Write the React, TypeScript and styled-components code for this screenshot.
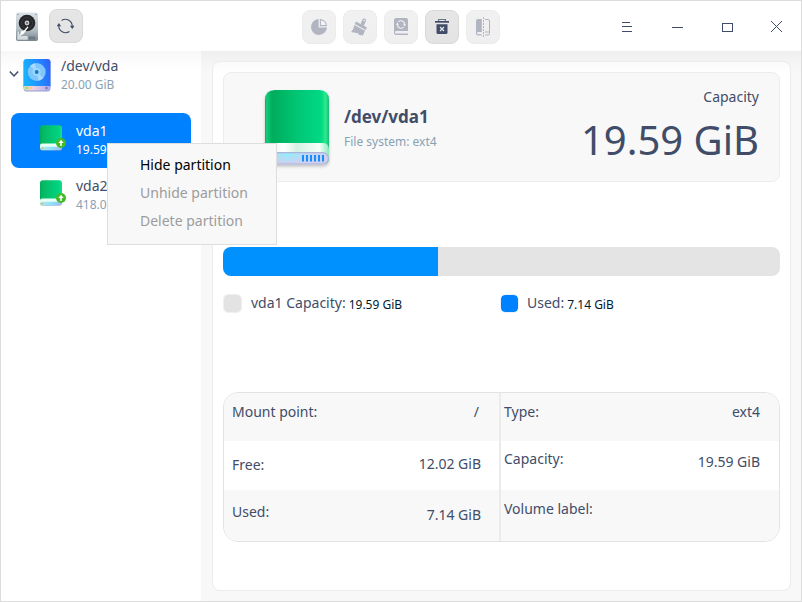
import React from "react";
import styled, { createGlobalStyle, css } from "styled-components";

const GlobalStyle = createGlobalStyle`
  * { box-sizing: border-box; }
  body {
    margin: 0;
    font-family: "Noto Sans", sans-serif;
    font-size: 14px;
    line-height: 19px;
    color: #414d68;
    white-space: nowrap;
  }
`;

const Window = styled.div`
  position: relative;
  width: 802px;
  height: 602px;
  border: 1px solid #dcdcdc;
  background: #f8f8f8;
  display: flex;
  flex-direction: column;
  overflow: hidden;
`;

const TitleBar = styled.header`
  height: 50px;
  flex: none;
  background: #fff;
  display: grid;
  grid-template-columns: 301px 1fr 200px;
`;

const TitleLeft = styled.div`
  display: flex;
  align-items: flex-start;
  gap: 10px;
  padding: 8px 0 0 14px;
`;

const AppIcon = styled.svg`
  width: 24px;
  height: 32px;
  margin-top: 1px;
`;

const Tools = styled.div`
  display: flex;
  gap: 7px;
  padding-top: 9px;
`;

const ToolButton = styled.button<{ $enabled?: boolean }>`
  width: 34px;
  height: 34px;
  padding: 0;
  border-radius: 8px;
  border: 1px solid ${(p) => (p.$enabled ? "#d9d9d9" : "#ececec")};
  background: ${(p) => (p.$enabled ? "linear-gradient(#e6e6e6, #e3e3e3)" : "linear-gradient(#f1f1f1, #efefef)")};
  color: ${(p) => (p.$enabled ? "#414d68" : "#b0b5c1")};
  display: flex;
  align-items: center;
  justify-content: center;
  svg { display: block; }
`;

const WindowControls = styled.div`
  display: grid;
  grid-template-columns: repeat(4, 50px);
  height: 50px;
`;

const Control = styled.button`
  border: 0;
  padding: 0;
  background: none;
  color: #414d68;
  svg { display: block; }
`;

const Body = styled.main`
  flex: 1;
  display: flex;
  min-height: 0;
`;

const Sidebar = styled.aside`
  width: 200px;
  background: linear-gradient(#f7f7f7, #fff 18px);
`;

const Disk = styled.div`
  height: 62px;
  display: flex;
  padding: 5px 0 0 8px;
`;

const Chevron = styled.svg`
  width: 10px;
  height: 8px;
  margin: 14px 4px 0 0;
`;

const DiskIcon = styled.svg`
  width: 28px;
  height: 36px;
  margin: 1px 10px 0 0;
`;

const DeviceName = styled.div``;

const DeviceSize = styled.div`
  font-size: 12px;
  line-height: 17px;
  margin-top: 1px;
  color: #8aa1b4;
`;

const Partition = styled.div<{ $selected?: boolean }>`
  height: 55px;
  width: 180px;
  margin-left: 10px;
  border-radius: 8px;
  display: flex;
  padding: 8px 0 0 28px;
  ${(p) => p.$selected && css`
    background: #0081ff;
    color: #fff;
    & ${DeviceSize} { color: #fff; }
  `}
`;

const PartitionIcon = styled.svg`
  width: 28px;
  height: 30px;
  margin: 2px 9px 0 0;
`;

const Content = styled.section`
  flex: 1;
  padding: 10px 10px 10px 11px;
  background: linear-gradient(#efefef, #f8f8f8 20px);
`;

const Card = styled.div`
  height: 530px;
  border: 1px solid #ececec;
  border-radius: 8px;
  background: linear-gradient(#fafafa, #fff 12px);
  padding: 10px;
`;

const Hero = styled.div`
  height: 110px;
  border: 1px solid #ededed;
  border-radius: 8px;
  background: #f8f8f8;
  display: flex;
  padding: 14px 20px 0 37px;
`;

const HeroIcon = styled.svg`
  width: 72px;
  height: 84px;
  margin-top: 1px;
`;

const HeroInfo = styled.div`
  flex: 1;
  padding: 18px 0 0 11px;
`;

const HeroName = styled.h1`
  margin: 0;
  font-size: 17px;
  font-weight: 700;
  line-height: 24px;
`;

const FileSystem = styled.div`
  margin-top: 4px;
  font-size: 12px;
  line-height: 17px;
  color: #8aa1b4;
`;

const HeroCapacity = styled.div`
  text-align: right;
`;

const CapacityValue = styled.div`
  font-size: 40px;
  line-height: 54px;
  margin-top: 7px;
`;

const UsageBar = styled.div`
  height: 29px;
  margin-top: 65px;
  border-radius: 8px;
  background: #e4e4e4;
  overflow: hidden;
`;

const UsageFill = styled.div`
  width: 215px;
  height: 100%;
  background: #0091ff;
`;

const Legend = styled.div`
  display: grid;
  grid-template-columns: 278px 1fr;
  margin-top: 17px;
`;

const LegendItem = styled.div`
  display: flex;
  height: 20px;
`;

const Swatch = styled.span<{ $used?: boolean }>`
  width: 19px;
  height: 19px;
  margin: 1px 9px 0 0;
  border: 1px solid ${(p) => (p.$used ? "#e8f3ff" : "#f0f0f0")};
  border-radius: 5px;
  background: ${(p) => (p.$used ? "#0081ff" : "#e3e3e3")};
  background-clip: padding-box;
  ${(p) => p.$used && "margin-left: -1px; margin-right: 8px;"}
`;

const LegendValue = styled.span`
  margin: 3px 0 0 3px;
  font-size: 12px;
  line-height: 17px;
  color: #001a2e;
`;

const Details = styled.div`
  height: 150px;
  margin-top: 79px;
  border: 1px solid #e3e3e3;
  border-radius: 15px;
  overflow: hidden;
  display: grid;
  grid-template-columns: 275px 2px 1fr;
`;

const Divider = styled.div`
  background: #ebebeb;
`;

const DetailColumn = styled.div`
  display: grid;
  grid-template-rows: 48px 49px 51px;
`;

const DetailRow = styled.div<{ $shade?: boolean; $right?: boolean }>`
  display: flex;
  justify-content: space-between;
  background: ${(p) => (p.$shade ? "#f8f8f8" : "#fff")};
  padding: 0 ${(p) => (p.$right ? "19px 0 3px" : "18px 0 8px")};
`;

const DetailText = styled.span<{ $top: number; $inset?: number }>`
  margin-top: ${(p) => p.$top}px;
  margin-right: ${(p) => p.$inset ?? 0}px;
`;

const Menu = styled.div`
  position: absolute;
  left: 106px;
  top: 142px;
  width: 170px;
  height: 102px;
  border: 1px solid #dedede;
  background: #f8f8f8;
  padding: 7px 0;
`;

const MenuItem = styled.div<{ $disabled?: boolean }>`
  height: 28px;
  line-height: 28px;
  padding-left: 32px;
  color: ${(p) => (p.$disabled ? "#9c9c9c" : "#000")};
`;

function HardDriveLogo() {
  return (
    <AppIcon viewBox="0 0 24 32">
      <defs>
        <linearGradient id="case" x1="0" y1="0" x2="0" y2="1">
          <stop offset="0" stopColor="#dce3e7" />
          <stop offset="0.6" stopColor="#b4bfc5" />
          <stop offset="1" stopColor="#77848c" />
        </linearGradient>
      </defs>
      <rect x="1" y="2.5" width="22" height="28.5" rx="2" fill="url(#case)" />
      <circle cx="3" cy="4.5" r=".8" fill="#8c979d" />
      <circle cx="21" cy="4.5" r=".8" fill="#8c979d" />
      <circle cx="12" cy="13" r="8.3" fill="#252629" />
      <circle cx="12" cy="13" r="5.5" fill="none" stroke="#3b3d41" />
      <circle cx="12" cy="13" r="2.4" fill="#c8cdd0" />
      <circle cx="12" cy="13" r="1" fill="#5c6266" />
      <path d="M2 21h2.5v3l2 1.5H13v4.5H2z" fill="#d5dcdf" stroke="#8c999f" strokeWidth=".7" />
      <path d="m13.5 17-5 7-3.5 1.5 1-4 3-1 3.5-4z" fill="#fff" />
      <path d="M14 26.5h6v3h-6z" fill="#65737c" />
      <path d="M16 26.5v3m2-3v3" stroke="#8a969d" strokeWidth=".6" />
    </AppIcon>
  );
}

function DriveIcon() {
  return (
    <DiskIcon viewBox="0 0 28 36">
      <defs>
        <linearGradient id="blue" x1="0" x2="1" y1=".2" y2="0">
          <stop offset="0" stopColor="#1ab0ff" />
          <stop offset=".55" stopColor="#2187ff" />
          <stop offset="1" stopColor="#325df5" />
        </linearGradient>
        <linearGradient id="base" x1="0" x2="1">
          <stop offset="0" stopColor="#c7dcb4" />
          <stop offset=".3" stopColor="#f3d3dc" />
          <stop offset="1" stopColor="#a9aaf2" />
        </linearGradient>
      </defs>
      <rect x=".6" y="2.6" width="26.8" height="32" rx="3" fill="#5969bd" opacity=".65" />
      <path d="M.5 5q0-3 3-3h21q3 0 3 3v25H.5z" fill="url(#blue)" />
      <path d="M1 29h26v2.5q0 2-2 2H3q-2 0-2-2z" fill="url(#base)" />
      <circle cx="13.7" cy="15" r="9" fill="#7fc6ff" />
      <path d="M13.7 15 7 9a9 9 0 0 1 5-2.8zM13.7 15l6.7 6a9 9 0 0 1-5 2.8z" fill="#a9d8ff" />
      <circle cx="13.7" cy="15" r="4" fill="#a0d6ff" />
      <circle cx="13.7" cy="15" r="2" fill="#1480bd" />
      <circle cx="4" cy="31" r="1.1" fill="#a4d04c" />
      <circle cx="8" cy="31" r="1.1" fill="#ffc65c" />
      <circle cx="23.5" cy="31" r="1.2" fill="#777ba4" />
    </DiskIcon>
  );
}

function GreenDrive() {
  return (
    <PartitionIcon viewBox="0 0 28 30">
      <defs>
        <linearGradient id="smallGreen">
          <stop offset="0" stopColor="#00a95c" />
          <stop offset=".12" stopColor="#06b861" />
          <stop offset=".85" stopColor="#00d483" />
          <stop offset="1" stopColor="#1add81" />
        </linearGradient>
        <linearGradient id="smallBase">
          <stop offset="0" stopColor="#c3dfe6" />
          <stop offset=".5" stopColor="#8ce4ff" />
          <stop offset="1" stopColor="#a6b7ee" />
        </linearGradient>
      </defs>
      <rect x="1" y="6" width="22" height="22" rx="3" fill="#6289bd" opacity=".45" />
      <path d="M1 5.2q0-3 3-3h16q3 0 3 3V24q0 3-2.5 3h-17Q1 27 1 24z" fill="url(#smallGreen)" />
      <path d="M1 22.4q0-2 2-2h18q2 0 2 2V25H1z" fill="#e8fff5" />
      <rect x="1.2" y="23.8" width="21.6" height="3.4" rx="1.7" fill="url(#smallBase)" />
      <circle cx="3.2" cy="25.4" r="1" fill="#a8cf79" />
      <circle cx="22" cy="20" r="5" fill="#43bb28" />
      <path d="M22 23v-5" stroke="#fff" strokeWidth="1.5" />
      <path d="m19.4 20 2.6-3.3 2.6 3.3z" fill="#fff" />
    </PartitionIcon>
  );
}

function LargeGreenDrive() {
  return (
    <HeroIcon viewBox="0 0 72 84">
      <defs>
        <linearGradient id="green">
          <stop offset="0" stopColor="#0da25e" />
          <stop offset=".025" stopColor="#20c979" />
          <stop offset=".08" stopColor="#02b866" />
          <stop offset=".12" stopColor="#00ad5c" />
          <stop offset=".5" stopColor="#00c674" />
          <stop offset=".88" stopColor="#00d985" />
          <stop offset=".95" stopColor="#2eeb88" />
          <stop offset="1" stopColor="#17b57b" />
        </linearGradient>
        <linearGradient id="paper">
          <stop offset="0" stopColor="#def3e9" />
          <stop offset=".3" stopColor="#fff" />
          <stop offset=".5" stopColor="#d2f2e4" />
          <stop offset=".85" stopColor="#f5fffa" />
          <stop offset="1" stopColor="#8de9bc" />
        </linearGradient>
        <linearGradient id="glass">
          <stop offset="0" stopColor="#c8ccef" />
          <stop offset=".35" stopColor="#86f4ff" />
          <stop offset=".6" stopColor="#b4dcfa" />
          <stop offset="1" stopColor="#d2d0ef" />
        </linearGradient>
        <linearGradient id="glassShade" x1="0" y1="0" x2="0" y2="1">
          <stop offset="0" stopColor="#d0cfee" stopOpacity="0" />
          <stop offset="1" stopColor="#d0cfee" />
        </linearGradient>
        <filter id="driveShadow" x="-20%" y="-20%" width="140%" height="150%">
          <feDropShadow dx="0" dy="2" stdDeviation="1.5" floodColor="#000" floodOpacity=".22" />
        </filter>
      </defs>
      <g filter="url(#driveShadow)">
        <path d="M4 12Q4 2 14 2h44q10 0 10 10v58q0 6-6 6H10q-6 0-6-6z" fill="url(#green)" />
        <path d="M4 62q0-7 6-7h52q6 0 6 7v8H4z" fill="url(#paper)" />
        <rect x="4.6" y="64.6" width="62.8" height="11.4" rx="5.5" fill="url(#glass)" />
        <rect x="4.6" y="64.6" width="62.8" height="11.4" rx="5.5" fill="url(#glassShade)" stroke="#aeb3d9" strokeWidth="1.2" />
      </g>
      <path d="M42 67v6.5m4-6.5v6.5m4-6.5v6.5m4-6.5v6.5m4-6.5v6.5m4-6.5v6.5" stroke="#168cff" strokeWidth="2" />
    </HeroIcon>
  );
}

function Toolbar() {
  return (
    <Tools>
      <ToolButton>
        <svg width="18" height="18" viewBox="0 0 18 18" fill="currentColor">
          <path d="M8.6 1A8 8 0 1 0 17 9.4H8.6z" />
          <path d="M10.4 1.6v6h6a6.6 6.6 0 0 0-6-6z" fill="#f3f3f3" stroke="currentColor" strokeWidth="1.1" />
        </svg>
      </ToolButton>
      <ToolButton>
        <svg width="20" height="20" viewBox="0 0 20 20" fill="currentColor">
          <path d="m6 4.6 10.9 6-1.2 2.4-11-6z" />
          <path d="m10.4 7.6 1.9-4.9Q13.3.9 15 1.7q1.700.9.9 2.600l-2.300 4.900z" />
          <path d="m4.200 7.900 10.900 5.900-2.400 4.900-1.600-1-.8.900-2.200-1.500.2-1.400-2.300.5-1.500-1-1.300.5-2.300-1.500 1-.3 1.600-2.300z" />
          <circle cx="14.200" cy="3.600" r=".8" fill="#f0f0f0" />
        </svg>
      </ToolButton>
      <ToolButton>
        <svg width="16" height="18" viewBox="0 0 16 18" fill="currentColor">
          <path d="M3 0h10q2 0 2 2v11H3q-1 0-1 1.300t1 1.300h12V17H3q-2 0-2-2V2q0-2 2-2z" />
          <path d="M5.400 3.900A3.600 3.600 0 0 1 11.600 6.500M10.600 9.100A3.600 3.600 0 0 1 4.400 6.500" fill="none" stroke="#f1f1f1" strokeWidth="1.200" />
          <path d="M10 6.200h3.200l-1.600 2.200zM2.800 6.800H6L4.400 4.600z" fill="#f1f1f1" />
        </svg>
      </ToolButton>
      <ToolButton $enabled>
        <svg width="16" height="18" viewBox="0 0 16 18" fill="currentColor">
          <path d="M4 3.200V1h8v2.200h-1.200V2H5.200v1.200z" opacity=".75" />
          <path d="M1 3h14v1.700H1z" />
          <path d="M2.500 6.200h11v8.300q0 1.500-1.500 1.500H4q-1.500 0-1.500-1.500z" />
          <path d="m6 9 4 4m0-4-4 4" stroke="#e7e7e7" strokeWidth="1.200" />
        </svg>
      </ToolButton>
      <ToolButton>
        <svg width="16" height="20" viewBox="0 0 16 20" fill="currentColor">
          <path d="M6.800 2H3Q1 2 1 4v12.500q0 2 2 2h3.800v-1.200H3.300q-1.300 0-1.300-1.200t1.300-1.200h3.500z" />
          <path d="M8.500 0v20" stroke="currentColor" strokeWidth="1" strokeDasharray="2 1" />
          <path d="M10 2.500h3q1.500 0 1.500 1.500v12.500q0 1.500-1.500 1.500h-3M10 15h4.500" fill="none" stroke="currentColor" strokeWidth="1" />
        </svg>
      </ToolButton>
    </Tools>
  );
}

function RefreshIcon() {
  return (
    <svg width="18" height="18" viewBox="0 0 18 18" fill="none">
      <path d="M4.600 3.500A6.800 6.800 0 0 1 15.200 9.500M12.400 14.500A6.800 6.800 0 0 1 1.800 8.500" stroke="currentColor" strokeWidth="1.100" />
      <path d="M12.900 8.800h4.600l-2.200 3.200zM-.4 9.200h4.500L1.900 6z" fill="currentColor" />
    </svg>
  );
}

function Controls() {
  return (
    <WindowControls>
      <Control>
        <svg width="50" height="50" shapeRendering="crispEdges" fill="currentColor">
          <path d="M21 21h8v1h-8zM21 25h10v1H21zM21 30h10v1H21z" />
        </svg>
      </Control>
      <Control>
        <svg width="50" height="50" shapeRendering="crispEdges" fill="currentColor">
          <path d="M21 26h11v1H21z" />
        </svg>
      </Control>
      <Control>
        <svg width="50" height="50" shapeRendering="crispEdges" fill="none" stroke="currentColor">
          <path d="M21.500 22.500h10v8h-10z" />
        </svg>
      </Control>
      <Control>
        <svg width="50" height="50" fill="none" stroke="currentColor">
          <path d="m20 20 11 11m0-11L20 31" />
        </svg>
      </Control>
    </WindowControls>
  );
}

type Detail = { label: string; value: string; labelTop: number; valueTop: number; inset?: number };

const details: Record<"left" | "right", Detail[]> = {
  left: [
    { label: "Mount point:", value: "/", labelTop: 9, valueTop: 9, inset: 2 },
    { label: "Free:", value: "12.02 GiB", labelTop: 14, valueTop: 13 },
    { label: "Used:", value: "7.14 GiB", labelTop: 12, valueTop: 15 },
  ],
  right: [
    { label: "Type:", value: "ext4", labelTop: 9, valueTop: 9 },
    { label: "Capacity:", value: "19.59 GiB", labelTop: 8, valueTop: 11 },
    { label: "Volume label:", value: "", labelTop: 9, valueTop: 9 },
  ],
};

function DetailList({ side }: { side: "left" | "right" }) {
  return (
    <DetailColumn>
      {details[side].map((d, i) => (
        <DetailRow key={d.label} $shade={i % 2 === 0} $right={side === "right"}>
          <DetailText $top={d.labelTop}>{d.label}</DetailText>
          <DetailText $top={d.valueTop} $inset={d.inset}>{d.value}</DetailText>
        </DetailRow>
      ))}
    </DetailColumn>
  );
}

export default function App() {
  return (
    <Window>
      <GlobalStyle />
      <TitleBar>
        <TitleLeft>
          <HardDriveLogo />
          <ToolButton $enabled><RefreshIcon /></ToolButton>
        </TitleLeft>
        <Toolbar />
        <Controls />
      </TitleBar>
      <Body>
        <Sidebar>
          <Disk>
            <Chevron viewBox="0 0 10 8"><path d="m.8 1.500 4.200 4.500 4.200-4.500" fill="none" stroke="#414d68" strokeWidth="1.500" /></Chevron>
            <DriveIcon />
            <div>
              <DeviceName>/dev/vda</DeviceName>
              <DeviceSize>20.00 GiB</DeviceSize>
            </div>
          </Disk>
          <Partition $selected>
            <GreenDrive />
            <div>
              <DeviceName>vda1</DeviceName>
              <DeviceSize>19.59 GiB</DeviceSize>
            </div>
          </Partition>
          <Partition>
            <GreenDrive />
            <div>
              <DeviceName>vda2</DeviceName>
              <DeviceSize>418.00 MiB</DeviceSize>
            </div>
          </Partition>
        </Sidebar>
        <Content>
          <Card>
            <Hero>
              <LargeGreenDrive />
              <HeroInfo>
                <HeroName>/dev/vda1</HeroName>
                <FileSystem>File system: ext4</FileSystem>
              </HeroInfo>
              <HeroCapacity>
                <div>Capacity</div>
                <CapacityValue>19.59 GiB</CapacityValue>
              </HeroCapacity>
            </Hero>
            <UsageBar><UsageFill /></UsageBar>
            <Legend>
              <LegendItem>
                <Swatch />vda1 Capacity:<LegendValue>19.59 GiB</LegendValue>
              </LegendItem>
              <LegendItem>
                <Swatch $used />Used:<LegendValue>7.14 GiB</LegendValue>
              </LegendItem>
            </Legend>
            <Details>
              <DetailList side="left" />
              <Divider />
              <DetailList side="right" />
            </Details>
          </Card>
        </Content>
      </Body>
      <Menu>
        <MenuItem>Hide partition</MenuItem>
        <MenuItem $disabled>Unhide partition</MenuItem>
        <MenuItem $disabled>Delete partition</MenuItem>
      </Menu>
    </Window>
  );
}
